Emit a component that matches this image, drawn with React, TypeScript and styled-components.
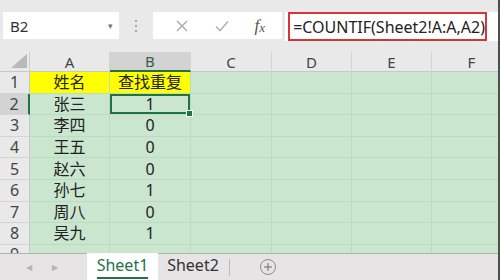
import styled, { createGlobalStyle } from 'styled-components'

const GlobalStyle = createGlobalStyle`
  html, body {
    margin: 0;
    padding: 0;
    background: #e6e6e6;
  }
`

const COLS = ['A', 'B', 'C', 'D', 'E', 'F']
const COL_WIDTHS = '30px 80px 81px 81px 80px 80px 80px'

const rows: { name: string; value: string }[] = [
  { name: '张三', value: '1' },
  { name: '李四', value: '0' },
  { name: '王五', value: '0' },
  { name: '赵六', value: '0' },
  { name: '孙七', value: '1' },
  { name: '周八', value: '0' },
  { name: '吴九', value: '1' }
]

const App = () => {
  return (
    <>
      <GlobalStyle />
      <Screen>
        <TopBar>
          <NameBox>
            <span>B2</span>
            <Caret>▾</Caret>
          </NameBox>
          <Grip>
            <i />
            <i />
            <i />
          </Grip>
          <ButtonGroup>
            <IconButton>
              <svg width='14' height='14' viewBox='0 0 14 14'>
                <path d='M2 2 L12 12 M12 2 L2 12' stroke='#a8a8a8' strokeWidth='1.4' fill='none' />
              </svg>
            </IconButton>
            <IconButton>
              <svg width='16' height='14' viewBox='0 0 16 14'>
                <path d='M2 7.5 L6 11.5 L14 2.5' stroke='#b4b4b4' strokeWidth='1.6' fill='none' />
              </svg>
            </IconButton>
            <Fx>
              f<sub>x</sub>
            </Fx>
          </ButtonGroup>
          <FormulaBar>
            <Formula>=COUNTIF(Sheet2!A:A,A2)</Formula>
          </FormulaBar>
        </TopBar>

        <Sheet>
          <Corner>
            <svg width='20' height='14' viewBox='0 0 20 14'>
              <path d='M20 0 L20 14 L4 14 Z' fill='#b9b9b9' />
            </svg>
          </Corner>
          {COLS.map(c => (
            <ColHead key={c} $active={c === 'B'}>
              {c}
            </ColHead>
          ))}

          <RowHead>1</RowHead>
          <Cell $yellow>姓名</Cell>
          <Cell $yellow>查找重复</Cell>
          <Cell />
          <Cell />
          <Cell />
          <Cell />

          {rows.map((r, i) => (
            <Row key={r.name} index={i + 2} name={r.name} value={r.value} />
          ))}

          <RowHead $partial>9</RowHead>
          <Cell />
          <Cell />
          <Cell />
          <Cell />
          <Cell />
          <Cell />
        </Sheet>

        <TabBar>
          <NavArrow>◀</NavArrow>
          <NavArrow>▶</NavArrow>
          <Tab $active>
            <span>Sheet1</span>
          </Tab>
          <Tab>
            <span>Sheet2</span>
          </Tab>
          <TabDivider />
          <AddSheet>
            <svg width='18' height='18' viewBox='0 0 18 18'>
              <circle cx='9' cy='9' r='7.5' stroke='#8a8a8a' strokeWidth='1' fill='none' />
              <path d='M9 5 V13 M5 9 H13' stroke='#6a6a6a' strokeWidth='1' />
            </svg>
          </AddSheet>
        </TabBar>
      </Screen>
    </>
  )
}

const Row = ({ index, name, value }: { index: number; name: string; value: string }) => {
  const selected = index === 2
  return (
    <>
      <RowHead $active={selected}>{index}</RowHead>
      <Cell>{name}</Cell>
      <Cell $selected={selected}>
        {value}
        {selected && <FillHandle />}
      </Cell>
      <Cell />
      <Cell />
      <Cell />
      <Cell />
    </>
  )
}

export default App

const Screen = styled.div`
  width: 500px;
  height: 280px;
  overflow: hidden;
  display: flex;
  flex-direction: column;
  background: #e6e6e6;
  border-right: 2px solid #4e4e4e;
  box-sizing: border-box;
`

const TopBar = styled.div`
  height: 52px;
  flex: none;
  display: flex;
  align-items: flex-start;
  padding: 12px 0 0 3px;
  box-sizing: border-box;
  background: #e9e9e9;
`

const NameBox = styled.div`
  width: 117px;
  height: 27px;
  background: #fff;
  display: flex;
  align-items: center;
  justify-content: space-between;
  padding: 0 6px 0 7px;
  box-sizing: border-box;
  font-family: 'Noto Sans', 'Liberation Sans', sans-serif;
  font-size: 15px;
  color: #333;
`

const Caret = styled.span`
  font-size: 9px;
  color: #777;
`

const Grip = styled.div`
  width: 35px;
  height: 27px;
  display: flex;
  flex-direction: column;
  align-items: center;
  justify-content: center;
  gap: 3px;
  i {
    width: 2px;
    height: 2px;
    background: #a6a6a6;
  }
`

const ButtonGroup = styled.div`
  width: 130px;
  height: 27px;
  background: #fff;
  display: flex;
  align-items: center;
  padding-left: 15px;
  box-sizing: border-box;
`

const IconButton = styled.div`
  width: 40px;
  display: flex;
  align-items: center;
  justify-content: center;
  margin-left: -6px;
  margin-right: 6px;
`

const Fx = styled.div`
  font-family: 'Liberation Serif', serif;
  font-style: italic;
  font-size: 17px;
  color: #555;
  margin-left: 6px;
  sub {
    font-size: 13px;
    vertical-align: -1px;
  }
`

const FormulaBar = styled.div`
  flex: 1;
  height: 29px;
  margin-left: 3px;
  background: #fff;
  padding: 0 11px 0 3px;
  display: flex;
  align-items: stretch;
`

const Formula = styled.div`
  flex: 1;
  border: 2px solid #d8343a;
  display: flex;
  align-items: center;
  padding-left: 3px;
  font-family: 'Noto Sans', 'Liberation Sans', sans-serif;
  font-size: 16px;
  color: #222;
  white-space: nowrap;
`

const Sheet = styled.div`
  flex: 1;
  display: grid;
  grid-template-columns: ${COL_WIDTHS};
  grid-template-rows: 20px repeat(9, 21.6px);
  overflow: hidden;
  background: #cbe6cf;
`

const Corner = styled.div`
  background: #e9e9e9;
  border-right: 1px solid #d0d0d0;
  border-bottom: 1px solid #c8c8c8;
  display: flex;
  align-items: flex-end;
  justify-content: flex-end;
  padding: 0 2px 3px 0;
`

const ColHead = styled.div<{ $active?: boolean }>`
  background: ${p => (p.$active ? '#d3d3d3' : '#e9e9e9')};
  border-right: 1px solid #d4d4d4;
  border-bottom: ${p => (p.$active ? '2px solid #217346' : '1px solid #c8c8c8')};
  display: flex;
  align-items: center;
  justify-content: center;
  font-family: 'Noto Sans', 'Liberation Sans', sans-serif;
  font-size: 15px;
  color: ${p => (p.$active ? '#3d5a47' : '#444')};
`

const RowHead = styled.div<{ $active?: boolean; $partial?: boolean }>`
  background: ${p => (p.$active ? '#d3d3d3' : '#e9e9e9')};
  border-right: ${p => (p.$active ? '2px solid #217346' : '1px solid #c8c8c8')};
  border-bottom: 1px solid #d4d4d4;
  display: flex;
  align-items: ${p => (p.$partial ? 'flex-start' : 'center')};
  padding-top: ${p => (p.$partial ? '1px' : '0')};
  justify-content: center;
  font-family: 'Noto Sans', 'Liberation Sans', sans-serif;
  font-size: 16px;
  line-height: 1;
  color: #444;
`

const Cell = styled.div<{ $yellow?: boolean; $selected?: boolean }>`
  position: relative;
  background: ${p => (p.$yellow ? '#ffff00' : 'transparent')};
  border-right: 1px solid #bcdcc1;
  border-bottom: 1px solid #bcdcc1;
  box-shadow: ${p => (p.$selected ? 'inset 0 0 0 2px #217346' : 'none')};
  display: flex;
  align-items: center;
  justify-content: center;
  font-family: 'Noto Sans', 'Noto Sans CJK SC', sans-serif;
  font-size: 16px;
  color: #222;
  line-height: 1;
`

const FillHandle = styled.span`
  position: absolute;
  right: -3px;
  bottom: -3px;
  width: 5px;
  height: 5px;
  background: #217346;
  border: 1px solid #fff;
  z-index: 1;
`

const TabBar = styled.div`
  height: 27px;
  flex: none;
  display: flex;
  align-items: stretch;
  background: #e6e4e5;
  border-top: 1px solid #a9b7aa;
  box-sizing: border-box;
  padding-left: 16px;
`

const NavArrow = styled.div`
  width: 26px;
  display: flex;
  align-items: center;
  justify-content: center;
  font-size: 8px;
  color: #b4b4b4;
  font-family: 'DejaVu Sans', sans-serif;
`

const Tab = styled.div<{ $active?: boolean }>`
  width: ${p => (p.$active ? '71px' : '70px')};
  margin-left: ${p => (p.$active ? '19px' : '0')};
  margin-top: -1px;
  background: ${p => (p.$active ? '#fff' : 'transparent')};
  display: flex;
  align-items: center;
  justify-content: center;
  font-family: 'Noto Sans', 'Liberation Sans', sans-serif;
  font-size: 16px;
  color: ${p => (p.$active ? '#217346' : '#333')};
  span {
    padding-bottom: 1px;
    border-bottom: ${p => (p.$active ? '2px solid #217346' : '2px solid transparent')};
  }
`

const TabDivider = styled.div`
  width: 1px;
  margin: 5px 0 4px 1px;
  background: #b8b8b8;
`

const AddSheet = styled.div`
  width: 76px;
  display: flex;
  align-items: center;
  justify-content: center;
`
